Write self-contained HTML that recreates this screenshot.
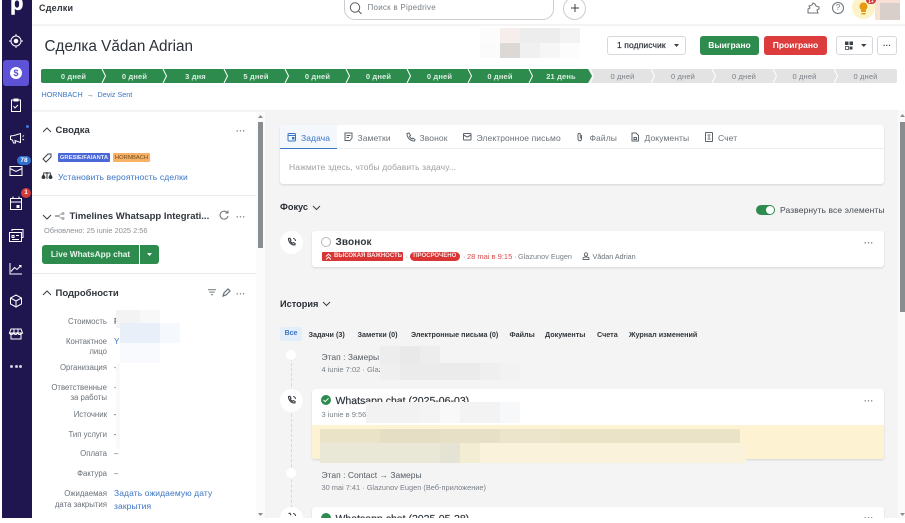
<!DOCTYPE html>
<html><head><meta charset="utf-8"><style>
html,body{margin:0;padding:0;width:905px;height:523px;overflow:hidden;background:#fff}
*{box-sizing:border-box}
body{font-family:"Liberation Sans","Noto Sans CJK JP",sans-serif;color:#22262b;position:relative}
#w{position:absolute;left:0;top:0;width:905px;height:523px;overflow:hidden;filter:blur(.3px)}
.a{position:absolute;white-space:nowrap}
.b{position:absolute}
.lbl{position:absolute;right:798px;font-size:7.800px;color:#6a7178;text-align:right;white-space:nowrap;font-weight:400}
.val{position:absolute;left:114px;font-size:8px;color:#6a7178}
.tab{position:absolute;top:133px;font-size:8.5px;color:#6a7178;white-space:nowrap;letter-spacing:.1px}
.f{position:absolute;top:330px;font-size:7.2px;font-weight:700;color:#30363c;white-space:nowrap}
.card{position:absolute;left:312px;width:572px;background:#fff;border-radius:3px;box-shadow:0 1px 2px rgba(0,0,0,.13)}
svg{position:absolute;overflow:visible}
.dots{position:absolute;font-size:9px;font-weight:700;color:#81878d;letter-spacing:.2px;line-height:6px;transform:translateY(1px)}
</style></head><body><div id="w">

<!-- sidebar -->
<div class="b" style="left:2px;top:0;width:30px;height:518px;background:#1f1650"></div>
<div class="a" style="left:10px;top:-8.500px;font-size:22px;font-weight:700;color:#fff;line-height:22px;-webkit-text-stroke:.4px #fff">p</div>
<div class="b" style="left:3px;top:60px;width:26px;height:26px;background:#5e52d6;border-radius:3px"></div>
<svg style="left:0;top:0" width="32" height="518" fill="none" stroke="#fff" stroke-width="1">
<circle cx="16" cy="41" r="5"/><circle cx="16" cy="41" r="1.8" fill="#fff"/><path d="M16 34v2M16 46v2M9 41h2M21 41h2"/>
<circle cx="16" cy="73" r="6" fill="#fff" stroke="none"/>
<path d="M11.500 100h9v11.500h-9zM14 99h4v2h-4zM13.500 106l1.500 2 3-3"/>
<path d="M10.500 136v3.500l2 .5 1 3h2l-.5-2.500 5.500 2v-9l-6.500 2zM22.500 136.500l1.500 -1M22.500 139l1.500 1"/>
<path d="M10 166.500h12v9H10zM10 168.500l6 3 6-3"/>
<path d="M10.500 198.500h11v11h-11zM10.500 202h11M13 196.500v2M19 196.500v2"/><rect x="16.500" y="205" width="3" height="3" fill="#fff" stroke="none"/>
<path d="M12 231v-1.500h11v8h-1.500M9.500 232.500h12v9h-12zM12 235.500h2v2h-2zM16 235.500h3M12 239.500h7"/>
<path d="M10 263v11h12M11 271.500l3.500-4 2.500 2 4-4M19 265.500h2v2"/>
<path d="M16 295l5.500 3v6l-5.500 3-5.500-3v-6zM10.500 298l5.500 3 5.500-3M16 301v6"/>
<path d="M11 329h10l1.500 4h-13zM11 333.500v5.500h10v-5.500M9.500 333c1 2 3 2 4 0 1 2 3 2 4 0 1 2 3 2 5 0M14 329v4M18 329v4"/>
</svg>
<div class="a" style="left:10px;top:68px;width:12px;text-align:center;font-size:9px;font-weight:700;color:#5e52d6;line-height:10px">$</div>
<div class="a" style="left:10px;top:365px;display:flex;gap:1.500px"><span style="width:3px;height:3px;background:#cfcde0;border-radius:50%"></span><span style="width:3px;height:3px;background:#cfcde0;border-radius:50%"></span><span style="width:3px;height:3px;background:#cfcde0;border-radius:50%"></span></div>
<div class="b" style="left:26px;top:125px;width:3px;height:3px;background:#3c78d8;border-radius:50%"></div>
<div class="a" style="left:17px;top:156px;width:14px;height:9px;background:#2f6fd0;color:#fff;border-radius:5px;font-size:6.500px;font-weight:700;text-align:center;line-height:9px">78</div>
<div class="a" style="left:21px;top:188px;width:10px;height:10px;background:#d33a3a;color:#fff;border-radius:50%;font-size:6.500px;font-weight:700;text-align:center;line-height:10px">1</div>

<!-- topbar -->
<div class="a" style="left:39px;top:3px;font-size:9px;font-weight:700;color:#30363c;letter-spacing:.2px">Сделки</div>
<div class="b" style="left:32px;top:24px;width:873px;height:2px;background:#f4f4f4"></div>
<div class="b" style="left:344px;top:-10px;width:210px;height:30px;border:1px solid #c9cdd1;border-radius:11px;background:#fff"></div>
<svg style="left:349px;top:1px" width="14" height="14" fill="none" stroke="#555c63" stroke-width="1"><circle cx="6" cy="6.500" r="4.700"/><path d="M9.500 10l3 3"/></svg>
<div class="a" style="left:367.500px;top:3px;font-size:8px;color:#7a8087;letter-spacing:.25px">Поиск в Pipedrive</div>
<div class="b" style="left:563px;top:-3px;width:23px;height:23px;border:1px solid #c9cdd1;border-radius:50%;background:#fff"></div>
<svg style="left:570px;top:3px" width="10" height="10" stroke="#3a4046" stroke-width="1"><path d="M5 1v8M1 5h8"/></svg>
<svg style="left:807px;top:1px" width="14" height="14" fill="none" stroke="#6a7178" stroke-width="1"><path d="M1 12V8l2-1 -1-2 3-1 1-2 2 1 1 2 3 1v2l-2 1 1 3z"/></svg>
<svg style="left:832px;top:1px" width="13" height="13" fill="none" stroke="#6a7178" stroke-width="1"><circle cx="6" cy="7" r="5.500"/></svg>
<div class="a" style="left:832px;top:3px;width:12px;text-align:center;font-size:8px;color:#6a7178">?</div>
<div class="b" style="left:852px;top:-4px;width:23px;height:23px;background:#fdf3c9;border-radius:50%"></div>
<svg style="left:858px;top:2px" width="12" height="13"><circle cx="5.500" cy="4.500" r="4" fill="#e59a12"/><rect x="3" y="8" width="5" height="2" fill="#e59a12"/><rect x="3.500" y="11" width="4" height="1.500" fill="#e59a12"/></svg>
<div class="b" style="left:875px;top:0;width:25px;height:20px;background:#d8cfcb"></div>
<div class="b" style="left:875px;top:0;width:5px;height:20px;background:#f8e2d0"></div>
<div class="b" style="left:875px;top:0;width:25px;height:3px;background:#f6dfd4"></div>
<div class="a" style="left:866px;top:-1px;width:10px;height:5px;background:#d33a3a;border-radius:0 0 4px 4px;color:#fff;font-size:5px;font-weight:700;line-height:6px;text-align:center">1+</div>

<!-- title -->
<div class="a" style="left:44.500px;top:38px;font-size:15.300px;color:#2c3238">Сделка Vădan Adrian</div>
<div class="b" style="left:480px;top:28px;width:20px;height:15px;background:#fcfcfc"></div>
<div class="b" style="left:480px;top:43px;width:20px;height:15px;background:#fbfbfb"></div>
<div class="b" style="left:500px;top:28px;width:20px;height:15px;background:#f6eeed"></div>
<div class="b" style="left:500px;top:43px;width:20px;height:15px;background:#dcd8d6"></div>
<div class="b" style="left:520px;top:28px;width:40px;height:15px;background:#ededee"></div>
<div class="b" style="left:520px;top:43px;width:20px;height:15px;background:#f0f0f1"></div>
<div class="b" style="left:540px;top:43px;width:20px;height:15px;background:#f6f6f6"></div>
<div class="b" style="left:560px;top:28px;width:20px;height:15px;background:#f3f3f3"></div>
<div class="b" style="left:560px;top:43px;width:20px;height:15px;background:#fcfcfc"></div>

<div class="a" style="left:607px;top:36px;width:79px;height:19px;border:1px solid #d5d8dc;border-radius:3px;font-size:8.500px;font-weight:400;color:#2c3238;line-height:17px;padding-left:9px;letter-spacing:.1px;-webkit-text-stroke:.2px #2c3238">1 подписчик</div>
<svg style="left:674px;top:44px" width="8" height="5"><path d="M0 0h5l-2.500 3z" fill="#3a4046"/></svg>
<div class="a" style="left:700px;top:36px;width:59px;height:19px;background:#2e8b4e;border-radius:3px;color:#fff;font-size:8.500px;font-weight:700;text-align:center;line-height:19px">Выиграно</div>
<div class="a" style="left:764px;top:36px;width:63px;height:19px;background:#dc3c3c;border-radius:3px;color:#fff;font-size:8.500px;font-weight:700;text-align:center;line-height:19px">Проиграно</div>
<div class="b" style="left:836px;top:36px;width:37px;height:19px;border:1px solid #d5d8dc;border-radius:3px"></div>
<svg style="left:844px;top:41px" width="10" height="10" fill="#3a4046"><rect x="1" y="0.500" width="3.500" height="3.500"/><rect x="5.500" y="0.500" width="3.500" height="3.500"/><rect x="1.500" y="5.500" width="3" height="3" fill="none" stroke="#3a4046" stroke-width=".8"/><rect x="5.500" y="5.500" width="3" height="3"/></svg>
<svg style="left:861px;top:44px" width="7" height="5"><path d="M0 0h5.500l-2.750 3z" fill="#3a4046"/></svg>
<div class="b" style="left:877px;top:36px;width:20px;height:19px;border:1px solid #d5d8dc;border-radius:3px"></div>
<div class="a" style="left:883px;top:41.500px;font-size:8px;font-weight:700;color:#3a4046;line-height:8px">···</div>

<!-- pipeline -->
<svg style="left:41px;top:69px" width="857" height="14">
<rect x="0" y="0" width="856" height="14" rx="2" fill="#e3e3e3"/>
<path d="M2 0H547L551 7 547 14H2Q0 14 0 12V2Q0 0 2 0z" fill="#2e8b4e"/>
<g fill="none" stroke="#fff" stroke-width="1" transform="translate(-41,0)">
<path d="M102 0l3.500 7-3.500 7M163 0l3.500 7-3.500 7M224 0l3.500 7-3.500 7M285 0l3.500 7-3.500 7M346 0l3.500 7-3.500 7M407 0l3.500 7-3.500 7M468 0l3.500 7-3.500 7M529 0l3.500 7-3.500 7M590 0l3.500 7-3.500 7M651 0l3.500 7-3.500 7M712 0l3.500 7-3.500 7M773 0l3.500 7-3.500 7M834 0l3.500 7-3.500 7"/>
</g>
<g font-family="Liberation Sans" font-size="7.500" text-anchor="middle" font-weight="700" fill="#dbeee1" letter-spacing=".15">
<text x="32.500" y="10">0 дней</text><text x="93.500" y="10">0 дней</text><text x="154.500" y="10">3 дня</text><text x="215" y="10">5 дней</text><text x="276.500" y="10">0 дней</text><text x="337.500" y="10">0 дней</text><text x="398.500" y="10">0 дней</text><text x="459" y="10">0 дней</text><text x="520" y="10">21 день</text>
</g>
<g font-family="Liberation Sans" font-size="7.500" text-anchor="middle" fill="#7a8087" letter-spacing=".15">
<text x="581.500" y="10">0 дней</text><text x="642" y="10">0 дней</text><text x="703" y="10">0 дней</text><text x="763.500" y="10">0 дней</text><text x="824.500" y="10">0 дней</text>
</g>
</svg>
<svg style="left:41px;top:89px" width="100" height="11" font-family="Liberation Sans" font-size="7.200">
<text x=".5" y="7.800" fill="#3a74c4">HORNBACH</text><text x="45.500" y="7.800" fill="#6a7178">→</text><text x="56.500" y="7.800" fill="#3a74c4">Deviz Sent</text>
</svg>

<!-- main bg -->
<div class="b" style="left:32px;top:110px;width:873px;height:408px;background:#f4f4f4"></div>
<div class="b" style="left:32px;top:112px;width:224px;height:406px;background:#fff"></div>
<div class="b" style="left:256px;top:112px;width:9px;height:406px;background:#fbfbfb"></div>
<div class="b" style="left:258px;top:122px;width:5px;height:126px;background:#8a8d90"></div>
<div class="b" style="left:898px;top:110px;width:7px;height:408px;background:#fafafa"></div>
<div class="b" style="left:900px;top:122px;width:5px;height:190px;background:#8a8d90"></div>
<svg style="left:258px;top:114px" width="6" height="5"><path d="M0 4h5L2.500 1z" fill="#8a8d90"/></svg>
<svg style="left:258px;top:513px" width="6" height="4"><path d="M0 0h5L2.500 3z" fill="#8a8d90"/></svg>
<svg style="left:900px;top:113px" width="6" height="5"><path d="M0 4h5L2.500 1z" fill="#8a8d90"/></svg>
<svg style="left:900px;top:513px" width="6" height="4"><path d="M0 0h5L2.500 3z" fill="#8a8d90"/></svg>

<!-- left panel -->
<svg style="left:42px;top:127px" width="10" height="6" fill="none" stroke="#3a4046" stroke-width="1"><path d="M1 5l4-4 4 4"/></svg>
<div class="a" style="left:55.500px;top:124.500px;font-size:9.500px;font-weight:700;color:#30363c;">Сводка</div>
<div class="dots" style="left:236px;top:127px">···</div>
<svg style="left:42px;top:153px" width="10" height="10" fill="none" stroke="#3a4046" stroke-width="1"><path d="M1 6l5-5h3v3L4 9z"/></svg>
<div class="a" style="left:58px;top:153px;width:52px;height:9px;background:#4a68d8;border-radius:1px;color:#e8ecfb;font-size:5.800px;font-weight:700;text-align:center;line-height:10px">GRESIE/FAIANTA</div>
<div class="a" style="left:113px;top:153px;width:37px;height:9px;background:#f7b064;border-radius:1px;color:#6d4a1f;font-size:5.800px;font-weight:400;text-align:center;line-height:10px">HORNBACH</div>
<svg style="left:41px;top:171px" width="12" height="10" fill="#30363c"><path d="M5.500 1h1v7h-1zM2 1.500h8v1H2z"/><path d="M0.500 6l2-3.500 2 3.500a2 2 0 0 1-4 0zM7.500 6l2-3.500 2 3.500a2 2 0 0 1-4 0z"/></svg>
<div class="a" style="left:58px;top:172px;font-size:8.500px;color:#3a74c4;letter-spacing:.15px">Установить вероятность сделки</div>
<div class="b" style="left:32px;top:195px;width:224px;height:1px;background:#e8e9ea"></div>
<svg style="left:42px;top:214px" width="10" height="6" fill="none" stroke="#3a4046" stroke-width="1"><path d="M1 1l4 4 4-4"/></svg>
<svg style="left:55px;top:212px" width="11" height="8" fill="#a5abb1"><rect x="0" y="3" width="4" height="2"/><circle cx="8" cy="1.500" r="1.500"/><circle cx="8" cy="6.500" r="1.500"/><path d="M3 3.500L7 1v1L4 4zM3 4.500L7 7V6L4 4z"/></svg>
<div class="a" style="left:69.500px;top:211px;font-size:9.500px;font-weight:700;color:#30363c">Timelines Whatsapp Integrati...</div>
<svg style="left:219px;top:210px" width="10" height="10" fill="none" stroke="#6a7178" stroke-width="1"><path d="M8.500 3A4 4 0 1 0 9 6M9 0.500V3H6.500"/></svg>
<div class="dots" style="left:236px;top:213px">···</div>
<div class="a" style="left:44px;top:226px;font-size:7.400px;color:#8c9196">Обновлено: 25 iunie 2025 2:56</div>
<div class="a" style="left:42px;top:245px;width:97px;height:19px;background:#2e8b4e;border-radius:3px 0 0 3px;color:#e8f5ec;font-size:8.300px;font-weight:700;text-align:center;line-height:19px">Live WhatsApp chat</div>
<div class="b" style="left:140px;top:245px;width:19px;height:19px;background:#2e8b4e;border-radius:0 3px 3px 0"></div>
<svg style="left:147px;top:253px" width="7" height="4"><path d="M0 0h5L2.500 3z" fill="#fff"/></svg>
<div class="b" style="left:32px;top:273px;width:224px;height:1px;background:#e8e9ea"></div>
<svg style="left:42px;top:290px" width="10" height="6" fill="none" stroke="#3a4046" stroke-width="1"><path d="M1 5l4-4 4 4"/></svg>
<div class="a" style="left:55.500px;top:287.500px;font-size:9.500px;font-weight:700;color:#30363c">Подробности</div>
<svg style="left:208px;top:289px" width="8" height="7" fill="#8c9196"><path d="M0 0h8v1.200H0zM1.300 2.500h5.400v1.200H1.300zM3 5h2v1.200H3z"/></svg>
<svg style="left:222px;top:288px" width="9" height="9" fill="none" stroke="#6a7178" stroke-width="1.200"><path d="M1 8l1-3 4-4 2 2-4 4z"/></svg>
<div class="dots" style="left:236px;top:290px">···</div>

<div class="lbl" style="top:316.500px">Стоимость</div>
<div class="lbl" style="top:336.500px">Контактное</div>
<div class="lbl" style="top:346.500px">лицо</div>
<div class="lbl" style="top:363px">Организация</div>
<div class="lbl" style="top:383px">Ответственные</div>
<div class="lbl" style="top:393px">за работы</div>
<div class="lbl" style="top:409.500px">Источник</div>
<div class="lbl" style="top:429.500px">Тип услуги</div>
<div class="lbl" style="top:449px">Оплата</div>
<div class="lbl" style="top:469px">Фактура</div>
<div class="lbl" style="top:488.500px">Ожидаемая</div>
<div class="lbl" style="top:499.500px">дата закрытия</div>
<div class="val" style="top:316.500px;color:#30363c">F</div>
<div class="val" style="top:336.500px;color:#3a74c4">Y</div>
<div class="val" style="top:363px">–</div>
<div class="val" style="top:383px">–</div>
<div class="val" style="top:409.500px;color:#30363c">–</div>
<div class="val" style="top:429.500px;color:#30363c">–</div>
<div class="val" style="top:449px">–</div>
<div class="val" style="top:469px">–</div>
<div class="a" style="left:114px;top:487px;font-size:8.500px;color:#3a74c4;letter-spacing:.1px;line-height:12.500px">Задать ожидаемую дату<br>закрытия</div>
<div class="b" style="left:116px;top:310px;width:24px;height:18px;background:#f3f3f3"></div>
<div class="b" style="left:140px;top:310px;width:20px;height:13px;background:#f8f8f8"></div>
<div class="b" style="left:120px;top:323px;width:40px;height:20px;background:#e9eff8"></div>
<div class="b" style="left:160px;top:323px;width:20px;height:20px;background:#f5f8fc"></div>
<div class="b" style="left:120px;top:343px;width:40px;height:20px;background:#f9fafd"></div>
<div class="b" style="left:116px;top:363px;width:4px;height:86px;background:#f9f9f9"></div>

<!-- composer -->
<div class="card" style="left:280px;top:125px;width:604px;height:59px"></div>
<div class="b" style="left:280px;top:148px;width:604px;height:1px;background:#eceded"></div>
<div class="b" style="left:280px;top:125px;width:57px;height:24px;background:#f4f8fd;border-radius:3px 0 0 0;border-bottom:1px solid #3a74c4"></div>
<svg style="left:287px;top:132px" width="10" height="10" fill="none" stroke="#3a74c4" stroke-width="1"><rect x="1" y="1.500" width="7.500" height="7.500" rx="1"/><path d="M1 3.500h7.500"/><rect x="5" y="5" width="2.500" height="2.500" fill="#3a74c4" stroke="none"/></svg>
<div class="tab" style="left:301px;color:#3a74c4">Задача</div>
<svg style="left:344px;top:132px" width="10" height="10" fill="none" stroke="#5c636a" stroke-width="1"><path d="M1 1h7v5L6 8.500H1zM2.500 3.500h4M2.500 5.500h2.500"/></svg>
<div class="tab" style="left:357.500px">Заметки</div>
<svg style="left:406px;top:132px" width="10" height="10" fill="none" stroke="#5c636a" stroke-width="1"><path d="M1 1.500l2-.5 1.500 2.500-1 1c.6 1.200 1.500 2 2.500 2.500l1-1L9 7.500l-.5 1.500C4 9 1 5.500 1 1.500z"/></svg>
<div class="tab" style="left:419.500px">Звонок</div>
<svg style="left:463px;top:132px" width="10" height="10" fill="none" stroke="#5c636a" stroke-width="1"><rect x="0.500" y="1.500" width="7.500" height="6.500" rx=".5"/><path d="M.5 3l3.750 2L8 3"/></svg>
<div class="tab" style="left:476.500px">Электронное письмо</div>
<svg style="left:576px;top:132px" width="8" height="10" fill="none" stroke="#5c636a" stroke-width="1"><path d="M5.500 3v4a1.700 1.700 0 0 1-3.500 0V2.500a1.100 1.100 0 0 1 2.300 0V6.500"/></svg>
<div class="tab" style="left:589.500px">Файлы</div>
<svg style="left:631px;top:132px" width="9" height="10" fill="none" stroke="#5c636a" stroke-width="1"><path d="M1 1h4l2.500 2.500V9H1zM3 5.500h2.500v2H3z"/></svg>
<div class="tab" style="left:644.500px">Документы</div>
<svg style="left:705px;top:132px" width="9" height="10" fill="none" stroke="#5c636a" stroke-width="1"><rect x=".5" y=".5" width="7" height="9" rx=".5"/><path d="M2.500 3h3M2.500 7h3M4 4v2"/></svg>
<div class="tab" style="left:718px">Счет</div>
<div class="a" style="left:289px;top:162px;font-size:8.500px;color:#9ca1a6;letter-spacing:.1px">Нажмите здесь, чтобы добавить задачу...</div>

<!-- focus -->
<div class="a" style="left:280px;top:202px;font-size:9.200px;font-weight:700;color:#2a2f35">Фокус</div>
<svg style="left:312px;top:205px" width="9" height="6" fill="none" stroke="#3a4046" stroke-width="1"><path d="M1 1l3.500 3.500L8 1"/></svg>
<div class="b" style="left:756px;top:205px;width:19px;height:10px;background:#2e8b4e;border-radius:5px"></div>
<div class="b" style="left:766px;top:206px;width:8px;height:8px;background:#fff;border-radius:50%"></div>
<div class="a" style="left:780px;top:205px;font-size:8.500px;color:#454b52;letter-spacing:.1px">Развернуть все элементы</div>
<div class="b" style="left:280px;top:231px;width:23px;height:23px;background:#fff;border-radius:50%"></div>
<svg class="ph" style="left:287px;top:237px" width="10" height="10" fill="none" stroke="#3a4046" stroke-width="1.100"><path d="M1.500 1.500l1.500-.3 1 2-.7.8c.5 1 1 1.600 2 2.200l.9-.7 2 1-.3 1.500C4 8 1.500 5 1.500 1.500zM6 1.500a2.500 2.500 0 0 1 2.500 2.500"/></svg>
<div class="card" style="left:312px;top:231px;height:36px"></div>
<div class="b" style="left:321px;top:237px;width:10px;height:10px;border:1px solid #b4b8bc;border-radius:50%"></div>
<div class="a" style="left:335.500px;top:236.500px;font-size:10px;font-weight:700;color:#30363c;letter-spacing:.1px">Звонок</div>
<div class="dots" style="left:864px;top:239px">···</div>
<div class="a" style="left:321.500px;top:252px;width:81px;height:9px;background:#d93535;border-radius:1px;color:#fbe4e4;font-size:6px;font-weight:700;line-height:9.500px;padding-left:12.500px">ВЫСОКАЯ ВАЖНОСТЬ</div>
<svg style="left:325px;top:253px" width="7" height="7" fill="none" stroke="#fff" stroke-width=".9"><path d="M1 3.500L3.500 1 6 3.500M1 6.500L3.500 4 6 6.500"/></svg>
<div class="a" style="left:405.500px;top:252px;font-size:7.500px;color:#6a7178">·</div>
<div class="a" style="left:410px;top:252px;width:49.500px;height:9px;background:#d93535;border-radius:5px;color:#fbe4e4;font-size:6px;font-weight:700;line-height:9.500px;text-align:center">ПРОСРОЧЕНО</div>
<div class="a" style="left:463px;top:252px;font-size:7.500px;color:#6a7178">·</div>
<div class="a" style="left:467px;top:252px;font-size:7.500px;color:#d64a4a">28 mai в 9:15</div>
<div class="a" style="left:514px;top:252px;font-size:7.500px;color:#6a7178">·</div>
<div class="a" style="left:518px;top:252px;font-size:7.300px;color:#7a8087">Glazunov Eugen</div>
<svg style="left:582px;top:252px" width="8" height="9" fill="none" stroke="#5c636a" stroke-width=".9"><circle cx="4" cy="2.500" r="1.700"/><path d="M1 7.500h6V6.500C7 5.500 6 5 4 5S1 5.500 1 6.500z"/></svg>
<div class="a" style="left:592.500px;top:252px;font-size:7.200px;color:#6a7178">Vădan Adrian</div>

<!-- history -->
<div class="a" style="left:280px;top:298.500px;font-size:9.200px;font-weight:700;color:#2a2f35">История</div>
<svg style="left:322px;top:301px" width="9" height="6" fill="none" stroke="#3a4046" stroke-width="1"><path d="M1 1l3.500 3.500L8 1"/></svg>
<div class="a" style="left:280px;top:327px;width:22px;height:14px;background:#e3eefb;border-radius:2px;color:#3a74c4;font-size:7px;font-weight:700;text-align:center;line-height:14px">Все</div>
<div class="f" style="left:308.500px">Задачи (3)</div>
<div class="f" style="left:357.500px">Заметки (0)</div>
<div class="f" style="left:411px">Электронные письма (0)</div>
<div class="f" style="left:509.500px">Файлы</div>
<div class="f" style="left:545px">Документы</div>
<div class="f" style="left:597px">Счета</div>
<div class="f" style="left:629px">Журнал изменений</div>

<div class="b" style="left:291px;top:358px;width:0;height:160px;border-left:1px dashed #d5d7d9"></div>
<div class="b" style="left:286px;top:350px;width:10px;height:10px;background:#fff;border-radius:50%"></div>
<div class="a" style="left:321.500px;top:351.500px;font-size:8.500px;color:#555c63">Этап : Замеры</div>
<div class="a" style="left:321.500px;top:365px;font-size:7.500px;color:#7a8087">4 iunie 7:02 · Glaz</div>
<div class="b" style="left:380px;top:346px;width:20px;height:17px;background:#ededed"></div>
<div class="b" style="left:400px;top:346px;width:20px;height:17px;background:#e9e9e9"></div>
<div class="b" style="left:420px;top:346px;width:20px;height:17px;background:#ededed"></div>
<div class="b" style="left:380px;top:363px;width:20px;height:17px;background:#efefef"></div>
<div class="b" style="left:400px;top:363px;width:80px;height:17px;background:#ebebeb"></div>
<div class="b" style="left:480px;top:363px;width:20px;height:17px;background:#efefef"></div>
<div class="b" style="left:500px;top:363px;width:20px;height:17px;background:#f2f2f2"></div>

<div class="b" style="left:280px;top:389px;width:23px;height:23px;background:#fff;border-radius:50%"></div>
<svg style="left:287px;top:395px" width="10" height="10" fill="none" stroke="#3a4046" stroke-width="1.100"><path d="M1.500 1.500l1.500-.3 1 2-.7.8c.5 1 1 1.600 2 2.200l.9-.7 2 1-.3 1.500C4 8 1.500 5 1.500 1.500zM6 1.500a2.500 2.500 0 0 1 2.500 2.500"/></svg>
<div class="card" style="top:389px;height:70px"></div>
<div class="b" style="left:312px;top:425px;width:572px;height:34px;background:#fdf3d3;border-radius:0 0 3px 3px"></div>
<div class="b" style="left:321px;top:395px;width:10px;height:10px;background:#2e8b4e;border-radius:50%"></div>
<svg style="left:323px;top:397px" width="6" height="6" fill="none" stroke="#fff" stroke-width="1"><path d="M.5 3l1.700 1.700L5.500 1.300"/></svg>
<div class="a" style="left:335.500px;top:394.500px;font-size:10.500px;color:#30363c;font-weight:400;-webkit-text-stroke:.2px #30363c">Whatsapp chat (2025-06-03)</div>
<div class="dots" style="left:864px;top:397px">···</div>
<div class="a" style="left:321.500px;top:410px;font-size:7.500px;color:#7a8087">3 iunie в 9:56</div>
<div class="b" style="left:366px;top:402px;width:84px;height:21px;background:#f2f2f2"></div>
<div class="b" style="left:420px;top:402px;width:20px;height:21px;background:#f4f4f4"></div>
<div class="b" style="left:440px;top:402px;width:20px;height:21px;background:#f9f9f9"></div>
<div class="b" style="left:460px;top:402px;width:40px;height:21px;background:#f3f3f3"></div>
<div class="b" style="left:500px;top:402px;width:20px;height:21px;background:#f7f8f9"></div>
<div class="b" style="left:320px;top:429px;width:420px;height:14px;background:#ebe3c8"></div>
<div class="b" style="left:380px;top:429px;width:60px;height:14px;background:#e6dec4"></div>
<div class="b" style="left:440px;top:429px;width:60px;height:14px;background:#e8e0c6"></div>
<div class="b" style="left:500px;top:429px;width:60px;height:14px;background:#ece5cc"></div>
<div class="b" style="left:320px;top:443px;width:160px;height:20px;background:#e9e8d6"></div>
<div class="b" style="left:440px;top:443px;width:20px;height:20px;background:#e5e4d4"></div>
<div class="b" style="left:460px;top:443px;width:20px;height:20px;background:#f3edd4"></div>
<div class="b" style="left:480px;top:443px;width:266px;height:20px;background:#faf2da"></div>

<div class="b" style="left:286px;top:468px;width:10px;height:10px;background:#fff;border-radius:50%"></div>
<div class="a" style="left:321.500px;top:470px;font-size:8.500px;color:#555c63">Этап : Contact → Замеры</div>
<div class="a" style="left:321.500px;top:483px;font-size:7.400px;color:#7a8087">30 mai 7:41 · Glazunov Eugen (Веб-приложение)</div>
<div class="b" style="left:280px;top:507px;width:23px;height:11px;background:#fff;border-radius:12px 12px 0 0"></div>
<svg style="left:287px;top:512px" width="10" height="6" fill="none" stroke="#3a4046" stroke-width="1.100"><path d="M1.500 1.500l1.500-.3 1 2M6 1.500a2.500 2.500 0 0 1 2.500 2.500"/></svg>
<div class="card" style="top:507px;height:11px;border-radius:3px 3px 0 0;overflow:hidden"></div>
<div class="b" style="left:321px;top:513px;width:10px;height:5px;background:#2e8b4e;border-radius:5px 5px 0 0"></div>
<div class="b" style="left:335px;top:508px;width:140px;height:10px;overflow:hidden"><div class="a" style="left:.5px;top:4.500px;font-size:10.500px;color:#30363c;-webkit-text-stroke:.2px #30363c">Whatsapp chat (2025-05-28)</div></div>
<div class="dots" style="left:864px;top:514px">···</div>
<div class="b" style="left:0;top:518px;width:905px;height:5px;background:#fff"></div>
</div></body></html>
